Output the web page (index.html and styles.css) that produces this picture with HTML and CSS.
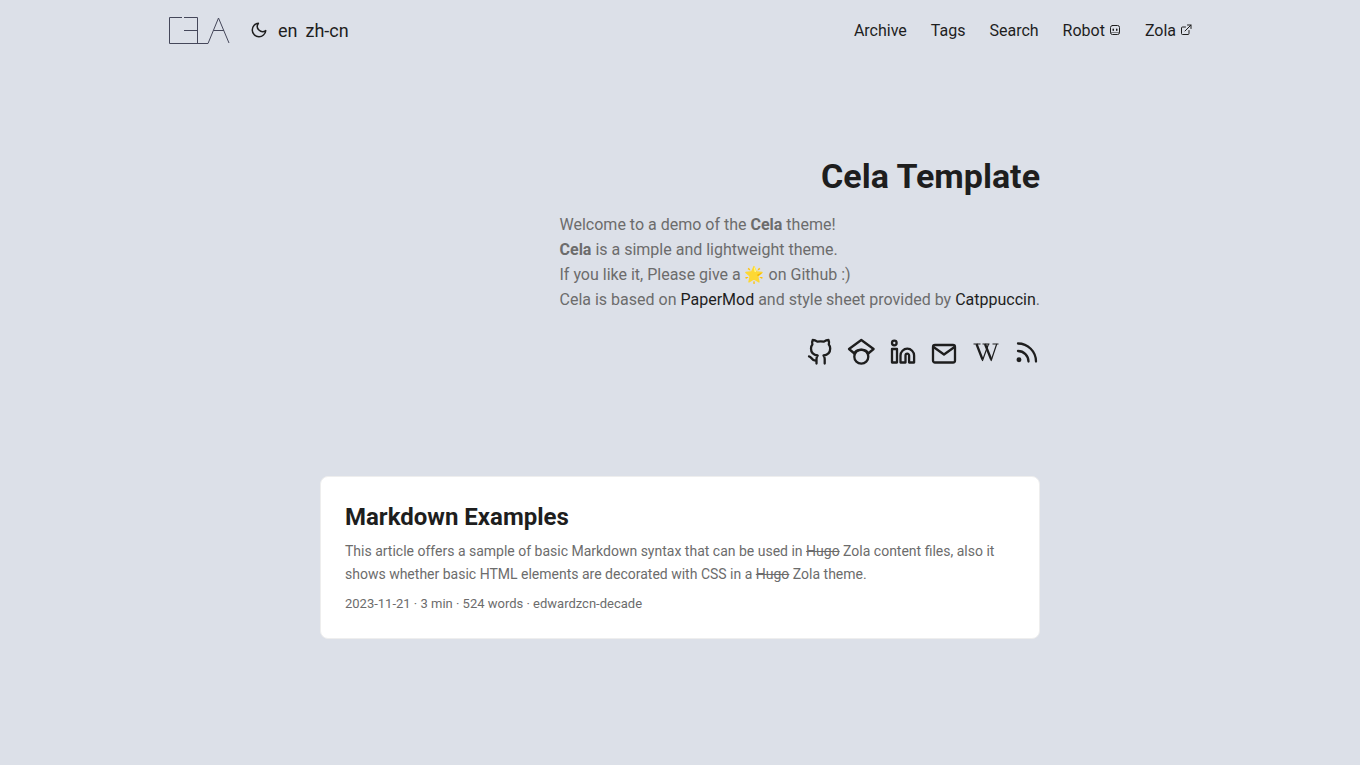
FILE: index.html
```
<!DOCTYPE html>
<html lang="en">
<head>
<meta charset="utf-8">
<meta name="viewport" content="width=device-width, initial-scale=1">
<title>Cela Template</title>
<link rel="stylesheet" href="styles.css">
</head>
<body>
<header class="header">
  <nav class="nav">
    <div class="brand">
      <a class="logo" href="#" aria-label="Cela">
        <svg width="62" height="28" viewBox="0 0 62 28" fill="none" stroke="currentColor" stroke-width="1">
          <path d="M14 1.5H1.5v26H40L50.500 2 61 27M16 1.500h13.500v26M16 14.500h13.500M45.500 14.500h10.500"/>
        </svg>
      </a>
      <button class="theme" type="button" aria-label="Toggle theme">
        <svg width="18" height="18" viewBox="0 0 24 24" fill="none" stroke="currentColor" stroke-width="2" stroke-linecap="round" stroke-linejoin="round"><path d="M21 12.790A9 9 0 1 1 11.210 3 7 7 0 0 0 21 12.790z"/></svg>
      </button>
      <a class="lang" href="#">en</a>
      <a class="lang" href="#">zh-cn</a>
    </div>
    <ul class="menu">
      <li><a href="#">Archive</a></li>
      <li><a href="#">Tags</a></li>
      <li><a href="#">Search</a></li>
      <li><a href="#">Robot
        <svg width="12" height="12" viewBox="0 0 24 24" fill="none" stroke="currentColor" stroke-width="2" stroke-linecap="round"><rect x="3" y="3" width="18" height="18" rx="4"/><path d="M3 17h18" stroke-width="1"/><path d="M8.500 10.500v2M15.500 10.500v2" stroke-width="3"/></svg></a></li>
      <li><a href="#">Zola
        <svg width="12" height="12" viewBox="0 0 24 24" fill="none" stroke="currentColor" stroke-width="2" stroke-linecap="round" stroke-linejoin="round"><path d="M18 13v6a2 2 0 0 1-2 2H5a2 2 0 0 1-2-2V8a2 2 0 0 1 2-2h6M15 2h7v7M10 14L22 2"/></svg></a></li>
    </ul>
  </nav>
</header>
<main class="main">
  <section class="intro">
    <h1 class="title">Cela Template</h1>
    <p class="welcome">Welcome to a demo of the <strong>Cela</strong> theme!<br>
      <strong>Cela</strong> is a simple and lightweight theme.<br>
      If you like it, Please give a 🌟 on Github :)<br>
      Cela is based on <a href="#">PaperMod</a> and style sheet provided by <a href="#">Catppuccin</a>.</p>
    <div class="social">
      <a href="#" aria-label="Github"><svg viewBox="0 0 26 26"><path d="M7.500 24.500v-4.500c0-1.400.4-2.600 1.200-3.500C4.500 16 2 13.500 2 9.500c0-1.700.5-3 1.400-4-.5-1.600-.4-3 .3-4.500 1.800 0 3.200.6 4.600 1.600 2.100-.4 4.500-.4 6.600 0C16.300 1.600 17.700 1 19.500 1c.7 1.500.8 2.900.3 4.500.9 1 1.400 2.300 1.400 4 0 4-2.500 6.500-6.700 7 .8.9 1.200 2.100 1.200 3.500v4.500M7.500 21.500C2.500 22.500 3 17.500 0 17.300"/></svg></a>
      <a href="#" aria-label="Google Scholar"><svg viewBox="0 0 26 26"><path d="M3.800 14L-1 10 11.300 1l12.300 9-4.800 4"/><circle cx="11.300" cy="17.700" r="7"/><path d="M4.300 14.500C6 9.600 16.600 9.600 18.300 14.500"/></svg></a>
      <a href="#" aria-label="LinkedIn"><svg viewBox="0 0 26 26"><circle cx="3.300" cy="4" r="2.300"/><path d="M1 10h5v13.500H1zM9.500 23.500v-7a6.800 6.800 0 0 1 13.600 0v7h-5v-7a1.800 1.800 0 0 0-3.600 0v7z"/></svg></a>
      <a href="#" aria-label="Email"><svg viewBox="0 0 26 26"><rect x="1" y="6" width="22" height="17.500" rx="2"/><path d="M1.500 8L12 15.500 22.500 8"/></svg></a>
      <a href="#" aria-label="Wikipedia"><svg viewBox="0 0 26 26"><g stroke-linecap="butt"><path d="M.5 5h7M9.500 5H16.500M19.500 5H25.500" stroke-width="1"/><path d="M3.500 5l6 15.500M12 5l6.200 15.500" stroke-width="2.300"/><path d="M9.300 22l6.200-17M18 22l5.700-17" stroke-width="1.200"/></g></svg></a>
      <a href="#" aria-label="RSS"><svg viewBox="0 0 26 26"><path d="M4 12a10.500 10.500 0 0 1 10.500 10.500M4 4.500a18 18 0 0 1 18 18"/><circle cx="5" cy="20.700" r="1.300" fill="currentColor"/></svg></a>
    </div>
  </section>
  <article class="card">
    <h2 class="card-title"><a href="#">Markdown Examples</a></h2>
    <p class="summary">This article offers a sample of basic Markdown syntax that can be used in <del>Hugo</del> Zola content files, also it shows whether basic HTML elements are decorated with CSS in a <del>Hugo</del> Zola theme.</p>
    <footer class="meta">2023-11-21 · 3 min · 524 words · edwardzcn-decade</footer>
  </article>
</main>
</body>
</html>
```
FILE: styles.css
```
* { box-sizing: border-box; margin: 0; padding: 0; }
body {
  min-height: 100vh;
  background: #dce0e8;
  color: #1e1e1e;
  font: 16px/25px Roboto, "Noto Color Emoji", sans-serif;
}
a { color: inherit; text-decoration: none; }
svg { overflow: visible; }
.nav {
  max-width: 1072px;
  margin: 0 auto;
  padding: 0 24px;
  min-height: 60px;
  display: flex;
  flex-wrap: wrap;
  align-items: center;
  justify-content: space-between;
}
.brand { display: flex; align-items: center; font-size: 18px; }
.logo { display: flex; margin-right: 20px; color: #45475a; }
.theme {
  display: flex;
  margin-right: 10px;
  border: 0;
  background: none;
  color: inherit;
  cursor: pointer;
}
.lang { margin-right: 8px; }
.menu { display: flex; flex-wrap: wrap; gap: 24px; list-style: none; }
.main { max-width: 768px; margin: 0 auto; padding: 24px; }
.intro {
  min-height: 350px;
  display: flex;
  flex-direction: column;
  align-items: flex-end;
  justify-content: center;
}
.title { font-size: 34px; line-height: 44px; font-weight: 700; }
.welcome { margin-top: 14px; color: #6c6c6c; }
.welcome a { color: #1e1e1e; }
.social { display: flex; gap: 15px; margin-top: 27px; }
.social a { display: flex; }
.social svg {
  width: 26px;
  height: 26px;
  fill: none;
  stroke: currentColor;
  stroke-width: 2.3;
  stroke-linecap: round;
  stroke-linejoin: round;
}
.card {
  margin-top: 42px;
  padding: 24px;
  background: #fff;
  border: 1px solid #eee;
  border-radius: 8px;
}
.card-title { font-size: 24px; line-height: 32px; font-weight: 700; }
.summary { margin: 7px 0; font-size: 14px; line-height: 23px; color: #6c6c6c; }
.meta { font-size: 13px; line-height: 21px; color: #6c6c6c; }
```
